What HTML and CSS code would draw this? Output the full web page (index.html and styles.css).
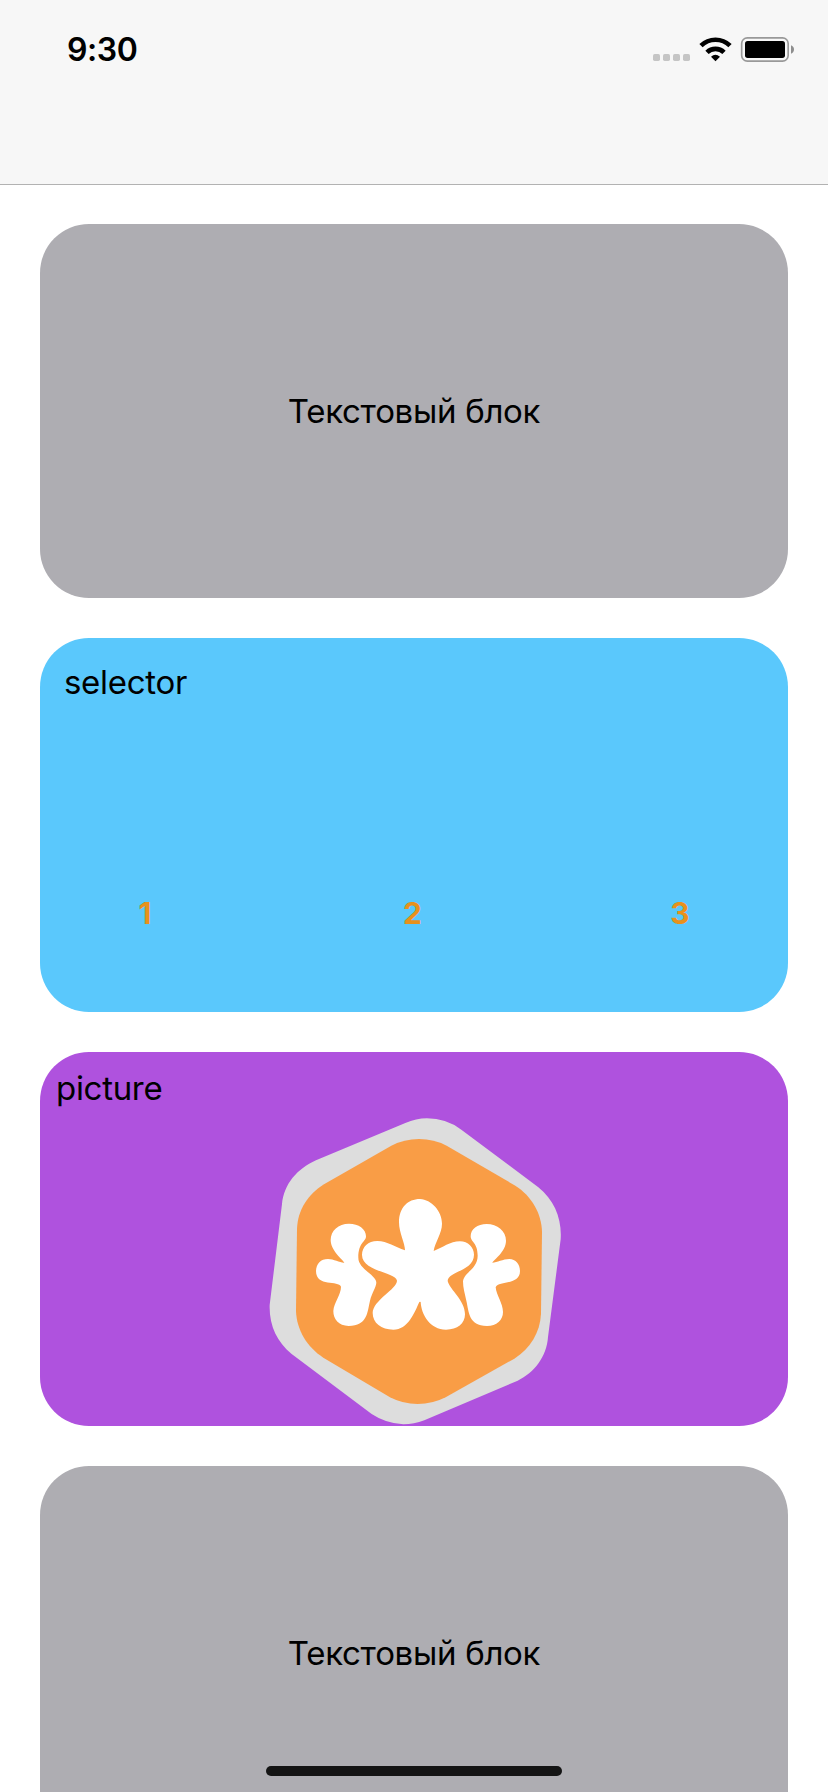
FILE: index.html
```html
<!DOCTYPE html>
<html lang="ru">
<head>
<meta charset="utf-8">
<title>Blocks</title>
<link rel="stylesheet" href="styles.css">
</head>
<body>
<div class="screen">
  <header class="navbar">
    <div class="status">
      <span class="time">9:30</span>
      <svg class="indicators" viewBox="0 0 564 180" aria-hidden="true">
        <g fill="#c5c5c5">
          <rect x="39" y="102" width="21" height="21" rx="5"/>
          <rect x="69" y="102" width="21" height="21" rx="5"/>
          <rect x="99" y="102" width="21" height="21" rx="5"/>
          <rect x="129" y="102" width="21" height="21" rx="5"/>
        </g>
        <g fill="none" stroke="#000" stroke-width="14">
          <path d="M183 77A62 62 0 0 1 270 77"/>
          <path d="M201 97A36 36 0 0 1 252 97"/>
        </g>
        <path d="M213 110Q226 98 240 110L226.500 123.500Z"/>
        <rect x="305" y="53.500" width="139.500" height="70" rx="17" fill="none" stroke="#999" stroke-width="5"/>
        <rect x="315" y="63" width="120" height="51" rx="8"/>
        <path d="M453 76Q462 80 462 88.500Q462 97 453 101Z" fill="#8e8e8e"/>
      </svg>
    </div>
  </header>
  <main class="list">
    <section class="card card-text"><p class="label">Текстовый блок</p></section>
    <section class="card card-selector">
      <p class="label">selector</p>
      <div class="options"><button class="option">1</button><button class="option">2</button><button class="option">3</button></div>
    </section>
    <section class="card card-picture">
      <p class="label">picture</p>
      <svg class="logo" viewBox="0 0 930 978" aria-hidden="true">
        <path fill="#ddd" d="M436 69Q468 55 501 55Q558 55 604 89L835 262C884 301 906 358 902 418L864 711C860 770 823 818 773 842L493 961Q462 973 430 973Q377 970 335 942L94 761C51 726 27 676 29 615L66 312C72 252 111 207 168 181Z"/>
        <path fill="#f99d46" d="M394 137Q433 117 477 117Q522 117 560 137L766 257C814 287 845 340 846 396L843 642C840 698 811 745 763 776L557 892Q518 912 473 912Q428 912 390 892L190 773C141 741 110 690 108 633L111 387C113 330 144 283 192 253Z"/>
        <g fill="#fff">
          <path d="M480 297C514 299 546 333 546 371C546 401 524 428 521 453C548 443 570 424 600 424C624 424 642 442 642 464C642 513 563 514 563 543C570 570 615 601 615 643C615 671 592 689 558 689C510 689 484 644 482 606Q480 604 478 606C463 639 444 689 400 689C364 689 338 669 338 639C338 601 411 567 411 542C407 516 306 515 306 465C306 441 324 423 352 423C382 423 406 442 435 451C435 429 417 399 417 367C417 323 443 297 480 297Z"/>
          <path d="M267 371C296 371 318 387 318 409C318 426 295 427 295 473C295 507 349 525 349 548C348 562 336 578 330 602C322 636 323 677 266 678C236 677 220 658 220 633C222 606 243 585 243 560C236 540 168 562 168 513C169 491 182 477 204 477C222 477 240 489 253 488C250 480 212 453 212 420C212 392 235 371 267 371Z"/>
          <path d="M680 372C712 372 738 394 738 422C738 455 700 480 697 488C711 488 729 477 748 477C767 477 780 492 780 513C780 557 715 541 707 562C709 586 729 610 729 636C729 660 710 678 681 678C625 677 627 635 619 602C614 580 609 563 609 544C612 517 653 507 653 467C653 427 632 427 632 409C632 387 652 372 680 372Z"/>
        </g>
      </svg>
    </section>
    <section class="card card-text"><p class="label">Текстовый блок</p></section>
  </main>
  <div class="home-indicator"></div>
</div>
</body>
</html>
```
FILE: styles.css
```css
* { box-sizing: border-box; }
body {
  margin: 0;
  background: #fff;
  color: #000;
  font-family: Inter, "Noto Sans", sans-serif;
}
.screen {
  position: relative;
  height: 1792px;
  overflow: hidden;
}
.navbar {
  height: 185px;
  padding-top: 20px;
  background: #f7f7f7;
  border-bottom: 1px solid #b2b2b2;
}
.status {
  display: flex;
  justify-content: space-between;
  height: 60px;
  padding-left: 67px;
}
.time {
  font-size: 32px;
  font-weight: 600;
  line-height: 60px;
  letter-spacing: -0.4px;
}
.indicators { width: 188px; height: 60px; }
.list {
  display: flex;
  flex-direction: column;
  gap: 40px;
  padding: 39px 40px 0;
}
.card {
  flex: none;
  height: 374px;
  border-radius: 49px;
  overflow: hidden;
}
.label {
  margin: 0;
  font-size: 33px;
  line-height: 40px;
  letter-spacing: -0.3px;
  white-space: nowrap;
}
.card-text {
  display: flex;
  align-items: center;
  justify-content: center;
  background: #aeadb2;
}
.card-selector {
  display: flex;
  flex-direction: column;
  justify-content: space-between;
  padding: 24px 0 79px;
  background: #5ac8fc;
}
.card-selector .label { padding-left: 24px; }
.options {
  display: flex;
  justify-content: space-between;
  padding: 0 78px 0 75px;
}
.option {
  width: 60px;
  padding: 0;
  border: 0;
  background: none;
  color: #e8911c;
  font: 700 30px/40px Inter, sans-serif;
}
.card-picture {
  display: grid;
  background: #af52de;
}
.card-picture > * { grid-area: 1 / 1; }
.card-picture .label { padding: 16px 0 0 16px; }
.logo {
  width: 310px;
  height: 326px;
  align-self: end;
  margin-left: 220px;
}
.home-indicator {
  position: absolute;
  left: 266px;
  bottom: 16px;
  width: 296px;
  height: 10px;
  border-radius: 5px;
  background: #141414;
}
```
